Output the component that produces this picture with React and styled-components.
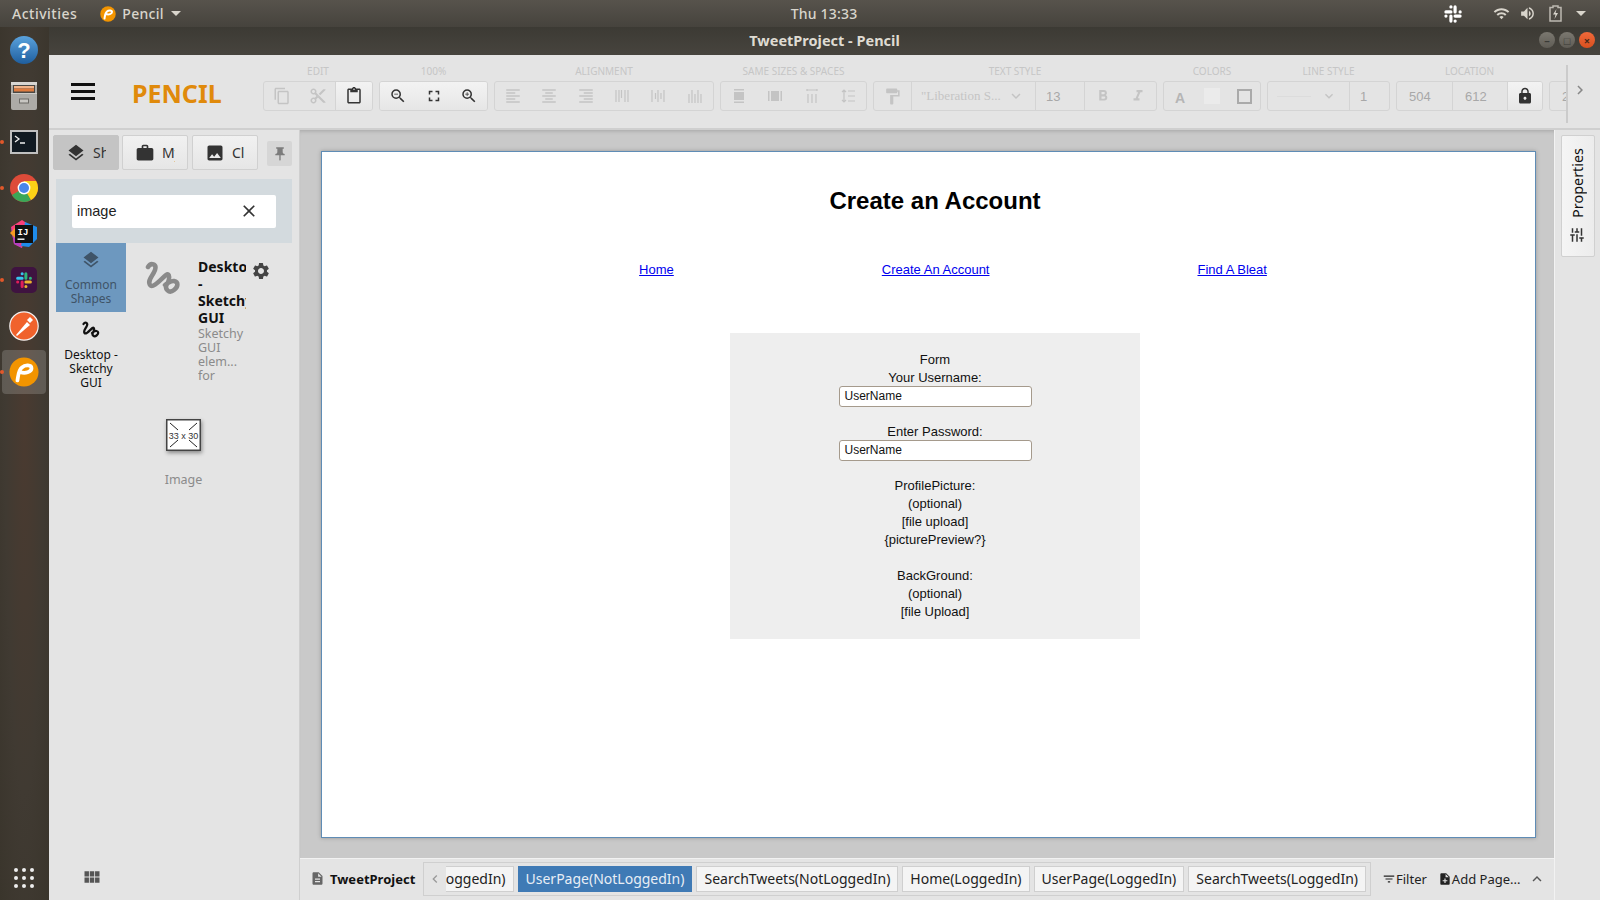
import React from "react";
import styled, { createGlobalStyle } from "styled-components";
import {
  MdLayers, MdWork, MdImage, MdPushPin, MdClose, MdSettings, MdContentCopy, MdContentCut,
  MdContentPaste, MdZoomIn, MdZoomOut, MdFullscreen, MdFormatAlignLeft, MdFormatAlignCenter,
  MdFormatAlignRight, MdFormatPaint, MdExpandMore, MdFormatBold, MdFormatItalic, MdLock,
  MdChevronRight, MdChevronLeft, MdViewModule, MdDescription, MdFilterList, MdNoteAdd,
  MdExpandLess, MdTune, MdWifi, MdVolumeUp,
} from "react-icons/md";

const GlobalStyle = createGlobalStyle`
  html, body { margin: 0; padding: 0; width: 1600px; height: 900px; overflow: hidden; }
  body { font-family: "Noto Sans", sans-serif; }
  * { box-sizing: border-box; }
`;

const Squiggle = ({ size = 36, color = "#8a8a8a", width = 4.5 }) => (
  <svg width={size} height={size} viewBox="0 0 36 36" fill="none" stroke={color} strokeWidth={width} strokeLinecap="round" strokeLinejoin="round">
    <path d="M3 6 C6 1 12 3 10 9 C8 15 2 19 5 24 C8 28 16 18 21 14 C25 11 25 19 22 23 C19 28 24 33 29 29 C33 26 34 21 29 20 C26 19.500 21 23 20 24" />
  </svg>
);

const PencilLogo = ({ size }) => (
  <svg width={size} height={size} viewBox="0 0 32 32">
    <circle cx="16" cy="16" r="15.5" fill="#f29400" />
    <path d="M9 25 C10 19 10 14 14 11 C17 8 24 8 24 12 C24 16 17 18 12 16" fill="none" stroke="#fff" strokeWidth="4" strokeLinecap="round" />
  </svg>
);

const SlackShape = ({ colors, w = 3.6 }) => (
  <g fill="none" strokeLinecap="round" strokeWidth={w}>
    <path d="M3.500 9.500h6M9.500 3.500h0.100" stroke={colors[0]} />
    <path d="M14.500 3.500v6M20.500 9.500h0.100" stroke={colors[1]} />
    <path d="M20.500 14.500h-6M14.500 20.500h0.100" stroke={colors[2]} />
    <path d="M9.500 20.500v-6M3.500 14.500h0.100" stroke={colors[3]} />
  </g>
);

const Bars = ({ d }) => (
  <svg width="16" height="16" viewBox="0 0 16 16" fill="none" stroke="currentColor" strokeWidth="1.2">
    <path d={d} />
  </svg>
);

const Desktop = styled.div`
  width: 1600px;
  height: 900px;
  display: flex;
  flex-direction: column;
  overflow: hidden;
  background: #3f3830;
`;

const TopBar = styled.div`
  height: 27px;
  flex: none;
  display: grid;
  grid-template-columns: 1fr auto 1fr;
  align-items: center;
  padding: 0 14px 0 12px;
  background: linear-gradient(#57534c, #46433d);
  color: #d9d5cc;
  font-size: 14px;
  font-weight: 500;
`;

const TopLeft = styled.div`
  display: flex;
  align-items: center;
  letter-spacing: 0.5px;
`;

const AppMenu = styled.div`
  display: flex;
  align-items: center;
  gap: 6px;
  margin-left: 23px;
  letter-spacing: 0.3px;
`;

const Caret = styled.span`
  width: 0;
  height: 0;
  margin-left: 1px;
  border-left: 5px solid transparent;
  border-right: 5px solid transparent;
  border-top: 5px solid #d9d5cc;
`;

const Clock = styled.div`
  margin-left: 50px;
  letter-spacing: 0.2px;
`;

const TopRight = styled.div`
  display: flex;
  align-items: center;
  justify-content: flex-end;
  color: #d9d5cc;
`;

const Tray = styled.span`
  display: flex;
  align-items: center;
  margin-left: ${(p) => p.$gap || 8}px;
`;

const Body = styled.div`
  flex: 1;
  min-height: 0;
  display: flex;
`;

const Dock = styled.div`
  width: 49px;
  flex: none;
  display: flex;
  flex-direction: column;
  align-items: center;
  padding: 1px 2px 0 0;
  background: radial-gradient(ellipse at 50% 45%, #4a3a30 0%, #403a32 55%, #3a352c 100%);
`;

const DockItem = styled.div`
  position: relative;
  width: 44px;
  height: 44px;
  margin-bottom: ${(p) => p.$mb ?? 2}px;
  border-radius: 4px;
  display: flex;
  align-items: center;
  justify-content: center;
  background: ${(p) => (p.$active ? "rgba(255,255,255,0.17)" : "transparent")};

  ${(p) =>
    p.$running &&
    `&::before {
      content: "";
      position: absolute;
      left: -2px;
      top: 20px;
      width: 4px;
      height: 4px;
      border-radius: 50%;
      background: #e2582a;
    }`}
`;

const DockGrid = styled.div`
  margin-top: auto;
  margin-bottom: 12px;
  display: grid;
  grid-template-columns: repeat(3, 4px);
  gap: 4px;

  span {
    width: 4px;
    height: 4px;
    border-radius: 50%;
    background: #eeeeee;
  }
`;

const Win = styled.div`
  flex: 1;
  min-width: 0;
  display: flex;
  flex-direction: column;
`;

const TitleBar = styled.div`
  position: relative;
  height: 28px;
  flex: none;
  display: flex;
  align-items: center;
  justify-content: center;
  padding-bottom: 2px;
  background: linear-gradient(#3c3a34, #47443e);
  color: #dfdbd2;
  font-size: 14.500px;
  font-weight: 700;
`;

const WinButtons = styled.div`
  position: absolute;
  right: 5px;
  top: 5px;
  display: flex;
  gap: 4px;
`;

const WinButton = styled.span`
  width: 16px;
  height: 16px;
  border-radius: 50%;
  display: flex;
  align-items: center;
  justify-content: center;
  font-size: 11px;
  line-height: 1;
  color: ${(p) => (p.$close ? "#4a2a1a" : "#3a3a36")};
  background: ${(p) => (p.$close ? "linear-gradient(#f0693a, #d9501f)" : "linear-gradient(#7b7870, #5f5c55)")};
`;

const Toolbar = styled.div`
  position: relative;
  height: 75px;
  flex: none;
  display: flex;
  background: #e4e4e4;
  border-bottom: 2px solid #cfcfcf;
  overflow: hidden;
`;

const Brand = styled.div`
  width: 214px;
  flex: none;
  display: flex;
  align-items: center;
  padding: 2px 0 0 22px;
`;

const Hamburger = styled.div`
  width: 24px;
  height: 17px;
  margin: 0 37px 3px 0;
  border-top: 3px solid #111;
  border-bottom: 3px solid #111;
  position: relative;

  &::after {
    content: "";
    position: absolute;
    left: 0;
    right: 0;
    top: 4px;
    height: 3px;
    background: #111;
  }
`;

const Logo = styled.div`
  color: #e08a0b;
  font-size: 25px;
  font-weight: 700;
`;

const ToolGroups = styled.div`
  width: 1304px;
  flex: none;
  display: flex;
  gap: 6px;
  overflow: hidden;
  padding-top: 9px;
`;

const ToolSection = styled.div`
  flex: none;
  width: ${(p) => p.$w}px;
  display: flex;
  flex-direction: column;
  align-items: center;
`;

const ToolLabel = styled.div`
  height: 17px;
  font-size: 10px;
  line-height: 15px;
  color: #c6c6c6;
  text-transform: uppercase;
  white-space: nowrap;
`;

const ToolBox = styled.div`
  width: 100%;
  height: 30px;
  display: flex;
  border: 1px solid #d4d4d4;
  border-radius: 3px;
  overflow: hidden;
`;

const ToolCell = styled.div`
  flex: ${(p) => (p.$w ? `0 0 ${p.$w}px` : "1 1 0")};
  display: flex;
  align-items: center;
  justify-content: ${(p) => p.$justify || "center"};
  padding: ${(p) => p.$pad || 0};
  font-size: 14px;
  color: ${(p) => (p.$on ? "#333" : "#c4c4c4")};
  background: ${(p) => (p.$on ? "linear-gradient(#f3f3f3, #e6e6e6)" : "transparent")};
  border-left: ${(p) => (p.$line ? "1px solid #d4d4d4" : "none")};
  white-space: nowrap;
`;

const FieldCell = styled(ToolCell)`
  justify-content: flex-start;
  padding-left: ${(p) => p.$left ?? 12}px;
  font-family: "Liberation Sans", sans-serif;
  font-size: 13px;
  color: #a8a8a8;
`;

const SerifValue = styled.span`
  flex: 1;
  font-family: "Liberation Serif", serif;
  font-size: 13px;
`;

const TextSwatch = styled.span`
  font-size: 14px;
  font-weight: 700;
  font-family: "Liberation Sans", sans-serif;
  color: #b5b5b5;
  padding-top: 3px;
`;

const FillSwatch = styled.span`
  width: 16px;
  height: 16px;
  background: #ebebeb;
`;

const StrokeSwatch = styled.span`
  width: 15px;
  height: 15px;
  border: 2px solid #aaaaaa;
`;

const LinePreview = styled.span`
  flex: 1;
  height: 1px;
  margin-right: 10px;
  background: #dcdcdc;
`;

const ToolMore = styled.div`
  position: absolute;
  right: 0;
  top: 0;
  bottom: 0;
  width: 34px;
  display: flex;
  align-items: center;
  justify-content: center;
  color: #888;
  background: #e4e4e4;
  padding: 0 6px 3px 0;

  &::before {
    content: "";
    position: absolute;
    left: 0;
    top: 10px;
    height: 58px;
    width: 2px;
    background: #cbcbcb;
  }
`;

const Main = styled.div`
  flex: 1;
  min-height: 0;
  display: flex;
`;

const SidePanel = styled.div`
  width: 251px;
  flex: none;
  display: flex;
  flex-direction: column;
  background: #e4e4e4;
  border-right: 1px solid #cfcfcf;
  padding: 5px 0 0 4px;
`;

const TabRow = styled.div`
  display: flex;
  align-items: center;
  height: 35px;
`;

const SideTab = styled.div`
  width: 66px;
  height: 35px;
  margin-right: ${(p) => p.$mr ?? 3}px;
  display: flex;
  align-items: center;
  gap: 7px;
  padding-left: 12px;
  border-radius: 2px;
  border: 1px solid ${(p) => (p.$active ? "#c4c4c4" : "#d0d0d0")};
  background: ${(p) => (p.$active ? "#c4c4c4" : "linear-gradient(#f1f1f1, #e6e6e6)")};
  color: #333;
  font-size: 14px;
`;

const TabText = styled.span`
  width: 13px;
  overflow: hidden;
  white-space: nowrap;
`;

const PinButton = styled.div`
  width: 25px;
  height: 25px;
  margin: 2px 0 0 9px;
  display: flex;
  align-items: center;
  justify-content: center;
  border-radius: 2px;
  background: #d6d6d6;
  color: #7c7c7c;
`;

const SearchArea = styled.div`
  width: 236px;
  height: 64px;
  margin: 9px 0 0 3px;
  padding: 16px;
  background: #d3dade;
`;

const SearchBox = styled.div`
  height: 33px;
  display: flex;
  align-items: center;
  justify-content: space-between;
  padding: 0 17px 2px 5px;
  border-radius: 2px;
  background: #fff;
  font-family: "Liberation Sans", sans-serif;
  font-size: 14.500px;
  color: #222;
`;

const Library = styled.div`
  flex: 1;
  min-height: 0;
  display: flex;
  margin-left: 3px;
`;

const CollectionList = styled.div`
  width: 70px;
  flex: none;
`;

const Collection = styled.div`
  height: ${(p) => (p.$active ? 69 : 90)}px;
  padding: ${(p) => (p.$active ? "7px 0 0" : "9px 7px 0")};
  display: flex;
  flex-direction: column;
  align-items: center;
  text-align: center;
  font-size: 12px;
  line-height: 14px;
  color: ${(p) => (p.$active ? "#3f5468" : "#111")};
  background: ${(p) => (p.$active ? "#6d98bf" : "transparent")};
`;

const CollectionIcon = styled.div`
  height: ${(p) => (p.$active ? 28 : 27)}px;
  color: #3f5468;
`;

const ShapePane = styled.div`
  flex: 1;
  min-width: 0;
  display: flex;
  flex-direction: column;
`;

const PaneHeader = styled.div`
  display: flex;
  padding: 18px 0 0 19px;
  height: 157px;
`;

const PaneIcon = styled.div`
  width: 53px;
  flex: none;
`;

const PaneText = styled.div`
  width: 48px;
  flex: none;
  margin-top: -3px;
  overflow: hidden;
  font-size: 14px;
  line-height: 17px;
`;

const PaneTitle = styled.div`
  font-weight: 700;
  color: #111;
`;

const PaneDesc = styled.div`
  margin-top: 1px;
  font-size: 12.500px;
  line-height: 14px;
  color: #8b8b8b;
`;

const GearIcon = styled.div`
  margin-left: 5px;
  color: #444;
`;

const ShapeCard = styled.div`
  width: 114px;
  padding-left: 1px;
  display: flex;
  flex-direction: column;
  align-items: center;
  color: #8b8b8b;
  font-size: 12.500px;
  margin-top: 19px;
`;

const ShapeThumb = styled.div`
  width: 35px;
  height: 32px;
  margin-bottom: 20px;
  box-shadow: 1px 2px 4px rgba(0, 0, 0, 0.4);
`;

const SideFooter = styled.div`
  height: 33px;
  flex: none;
  padding-left: 29px;
  color: #555;
`;

const Center = styled.div`
  flex: 1;
  min-width: 0;
  display: flex;
  flex-direction: column;
`;

const CanvasArea = styled.div`
  flex: 1;
  min-height: 0;
  padding: 21px 18px 20px 21px;
  background: #c9c9c9;
  box-shadow: inset 0 4px 4px -3px rgba(0, 0, 0, 0.18);
`;

const Page = styled.div`
  height: 100%;
  padding: 35px 0 0 13px;
  background: #fff;
  border: 1px solid #5f8cb5;
  box-shadow: 0 0 4px rgba(0, 0, 0, 0.25);
  display: flex;
  flex-direction: column;
  align-items: center;
  font-family: "Liberation Sans", sans-serif;
  font-size: 13px;
  color: #111;
`;

const Heading = styled.h1`
  margin: 0;
  font-size: 24px;
  line-height: 28px;
  font-weight: 700;
  color: #000;
`;

const NavLinks = styled.nav`
  display: flex;
  gap: 208px;
  margin: 46px 0 0 36px;
  line-height: 18px;
`;

const NavLink = styled.a`
  color: #0000ee;
  text-decoration: underline;
`;

const FormBox = styled.div`
  width: 410px;
  height: 306px;
  margin-top: 54px;
  padding-top: 18px;
  background: #eeeeee;
  text-align: center;
  line-height: 18px;
`;

const FormBlock = styled.div`
  margin-bottom: 18px;
`;

const FakeInput = styled.div`
  width: 193px;
  height: 21px;
  margin: -1px auto -2px;
  padding-left: 5px;
  background: #fff;
  border: 1px solid #a59a8c;
  border-radius: 3px;
  text-align: left;
  font-size: 12px;
  line-height: 19px;
  color: #111;
`;

const BottomBar = styled.div`
  height: 42px;
  flex: none;
  display: flex;
  align-items: center;
  padding-bottom: 2px;
  background: #e4e4e4;
  border-top: 1px solid #f2f2f2;
  font-size: 14px;
  color: #222;
`;

const ProjectName = styled.div`
  width: 123px;
  flex: none;
  display: flex;
  align-items: center;
  gap: 5px;
  padding-left: 10px;
  font-size: 13px;
  font-weight: 700;
  color: #111;
`;

const PageTabs = styled.div`
  position: relative;
  width: 948px;
  height: 34px;
  flex: none;
  display: flex;
  justify-content: flex-end;
  align-items: center;
  gap: 4px;
  padding-right: 4px;
  border: 1px solid #cfcfcf;
  overflow: hidden;
`;

const PageTab = styled.div`
  flex: none;
  height: 26px;
  display: flex;
  align-items: center;
  padding: 0 7px;
  white-space: nowrap;
  background: ${(p) => (p.$active ? "#3f7ab5" : "#f4f4f4")};
  border: 1px solid ${(p) => (p.$active ? "#3f7ab5" : "#cfcfcf")};
  color: ${(p) => (p.$active ? "#e8eef5" : "#222")};
`;

const ScrollLeft = styled.div`
  position: absolute;
  left: 0;
  top: 0;
  bottom: 0;
  width: 22px;
  display: flex;
  align-items: center;
  justify-content: center;
  background: #e4e4e4;
  color: #999;
`;

const BarAction = styled.div`
  display: flex;
  align-items: center;
  margin-left: ${(p) => p.$ml}px;
  font-size: 13px;
  color: #222;
  white-space: nowrap;
`;

const Properties = styled.div`
  width: 46px;
  flex: none;
  padding: 5px 5px 0 6px;
  background: #e4e4e4;
  border-left: 1px solid #f2f2f2;
`;

const PropertiesTab = styled.div`
  height: 122px;
  display: flex;
  flex-direction: column;
  align-items: center;
  justify-content: flex-end;
  gap: 8px;
  padding: 0 2px 12px 0;
  background: linear-gradient(90deg, #f5f5f5, #ececec);
  border: 1px solid #d0d0d0;
  border-radius: 2px;
  color: #333;
`;

const PropertiesLabel = styled.div`
  writing-mode: vertical-rl;
  transform: rotate(180deg);
  font-size: 14.400px;
  color: #111;
`;

const TuneIcon = styled(MdTune)`
  transform: rotate(90deg);
`;

const Row = ({ label, cells, w }) => (
  <ToolSection $w={w}>
    <ToolLabel>{label}</ToolLabel>
    <ToolBox>{cells}</ToolBox>
  </ToolSection>
);

const lines = {
  distLeft: "M2 2v12M5 2v12M7.500 2v8M11 2v12M14 2v12",
  distCenter: "M2 2v12M5.500 5v6M8 2v12M11 5v6M14 2v12",
  distRight: "M2 6v9M5 2v13M8 6v9M11 2v13M14 6v9",
  sameTop: "M3 2h10M3 1v2M13 1v2M4 6v9M8 6v9M12 6v9",
  sameSpace: "M4 2v12M2 4l2-2 2 2M2 12l2 2 2-2M8 3h7M8 8h7M8 13h7",
};

export default function App() {
  const white = ["#fff", "#fff", "#fff", "#fff"];
  return (
    <Desktop>
      <GlobalStyle />
      <TopBar>
        <TopLeft>
          Activities
          <AppMenu>
            <PencilLogo size={16} />
            Pencil
            <Caret />
          </AppMenu>
        </TopLeft>
        <Clock>Thu 13:33</Clock>
        <TopRight>
          <svg width="20" height="20" viewBox="0 0 24 24"><SlackShape colors={white} w={3.8} /></svg>
          <Tray $gap={30}><MdWifi size={17} /></Tray>
          <Tray $gap={9}><MdVolumeUp size={17} /></Tray>
          <Tray $gap={13}>
            <svg width="13" height="17" viewBox="0 0 13 17">
              <path d="M4 1h5v1.500h3V16H1V2.500h3z" fill="none" stroke="#bdb9b1" strokeWidth="1.500" />
              <path d="M7.500 4L4 9.500h2.500L5.500 14 9 8H6.500z" fill="#d9d5cc" />
            </svg>
          </Tray>
          <Tray $gap={13}><Caret /></Tray>
        </TopRight>
      </TopBar>
      <Body>
        <Dock>
          <DockItem>
            <svg width="30" height="30" viewBox="0 0 30 30">
              <defs>
                <linearGradient id="help" x1="0" y1="0" x2="0" y2="1">
                  <stop offset="0" stopColor="#5aa2dd" />
                  <stop offset="1" stopColor="#1f5e9e" />
                </linearGradient>
              </defs>
              <circle cx="15" cy="15" r="14" fill="url(#help)" />
              <text x="15" y="23" textAnchor="middle" fontFamily="Liberation Sans" fontWeight="700" fontSize="22" fill="#fff">?</text>
            </svg>
          </DockItem>
          <DockItem>
            <svg width="28" height="30" viewBox="0 0 28 30">
              <rect x="1" y="1" width="26" height="28" rx="2" fill="#adaba7" />
              <rect x="1" y="1" width="26" height="3" fill="#d8d6d2" />
              <rect x="3" y="4" width="22" height="8" fill="#4a4844" />
              <rect x="4" y="5" width="20" height="2.500" fill="#f1b48a" />
              <rect x="4" y="7.500" width="20" height="3" fill="#df7b3e" />
              <rect x="1" y="12" width="26" height="1" fill="#cfcdc9" />
              <rect x="9.500" y="18" width="9" height="4" fill="#c8c6c2" stroke="#6d6b67" />
            </svg>
          </DockItem>
          <DockItem $running>
            <svg width="28" height="24" viewBox="0 0 28 24">
              <rect x="1" y="1" width="26" height="22" fill="#111a22" stroke="#c0c0c0" strokeWidth="2" />
              <path d="M5 6l4 3-4 3M10 13h5" fill="none" stroke="#eee" strokeWidth="1.300" />
            </svg>
          </DockItem>
          <DockItem $running>
            <svg width="28" height="28" viewBox="0 0 28 28">
              <circle cx="14" cy="14" r="14" fill="#dd4b39" />
              <path d="M14 14 L1.900 21 A14 14 0 0 0 21 26.100Z" fill="#3aa757" />
              <path d="M14 14 L21 26.100 A14 14 0 0 0 26.100 7 L14 7Z" fill="#fcd116" />
              <circle cx="14" cy="14" r="6.400" fill="#fff" />
              <circle cx="14" cy="14" r="5" fill="#4a86e8" />
            </svg>
          </DockItem>
          <DockItem>
            <svg width="30" height="30" viewBox="0 0 30 30">
              <path d="M2 8l11-7 6 4-6 24-8-4z" fill="#fc3f7a" />
              <path d="M16 3l12 5v12l-8 8-8-1z" fill="#1f8ceb" />
              <path d="M2 8l3 17 8 4z" fill="#b13fc0" />
              <path d="M1 14l5-5v10z" fill="#f59a23" />
              <rect x="6" y="6" width="18" height="18" fill="#111" />
              <text x="8.500" y="15.500" fontFamily="Liberation Mono" fontWeight="700" fontSize="9" fill="#fff">IJ</text>
              <rect x="8.500" y="19.500" width="7" height="1.400" fill="#fff" />
            </svg>
          </DockItem>
          <DockItem $running>
            <svg width="26" height="26" viewBox="0 0 26 26">
              <rect width="26" height="26" rx="5" fill="#3f1340" />
              <g transform="translate(4 4) scale(0.75)">
                <SlackShape colors={["#36c5f0", "#2eb67d", "#ecb22e", "#e01e5a"]} w={4} />
              </g>
            </svg>
          </DockItem>
          <DockItem>
            <svg width="30" height="30" viewBox="0 0 30 30">
              <circle cx="15" cy="15" r="14.200" fill="#f0622c" stroke="#f3f3f3" strokeWidth="1.200" />
              <path d="M7 24l11-13 3 3-13 11z" fill="#fff" />
              <path d="M18 9l3-3 3 3-3 3z" fill="#fff" />
            </svg>
          </DockItem>
          <DockItem $active $running $mb={0}>
            <PencilLogo size={30} />
          </DockItem>
          <DockGrid>
            {Array.from({ length: 9 }).map((_, i) => <span key={i} />)}
          </DockGrid>
        </Dock>
        <Win>
          <TitleBar>
            TweetProject - Pencil
            <WinButtons>
              <WinButton>–</WinButton>
              <WinButton>□</WinButton>
              <WinButton $close>×</WinButton>
            </WinButtons>
          </TitleBar>
          <Toolbar>
            <Brand>
              <Hamburger />
              <Logo>PENCIL</Logo>
            </Brand>
            <ToolGroups>
              <Row label="Edit" w={110} cells={<>
                <ToolCell><MdContentCopy size={18} /></ToolCell>
                <ToolCell><MdContentCut size={18} /></ToolCell>
                <ToolCell $on $line><MdContentPaste size={18} /></ToolCell>
              </>} />
              <Row label="100%" w={109} cells={<>
                <ToolCell $on><MdZoomOut size={18} /></ToolCell>
                <ToolCell $on><MdFullscreen size={18} /></ToolCell>
                <ToolCell $on><MdZoomIn size={18} /></ToolCell>
              </>} />
              <Row label="Alignment" w={220} cells={<>
                <ToolCell><MdFormatAlignLeft size={18} /></ToolCell>
                <ToolCell><MdFormatAlignCenter size={18} /></ToolCell>
                <ToolCell><MdFormatAlignRight size={18} /></ToolCell>
                <ToolCell><Bars d={lines.distLeft} /></ToolCell>
                <ToolCell><Bars d={lines.distCenter} /></ToolCell>
                <ToolCell><Bars d={lines.distRight} /></ToolCell>
              </>} />
              <Row label="Same sizes & spaces" w={147} cells={<>
                <ToolCell>
                  <svg width="16" height="16" viewBox="0 0 16 16" fill="currentColor"><path d="M3 1h10v1.500H3zM3 13.500h10V15H3zM3 4h10v8H3z" /></svg>
                </ToolCell>
                <ToolCell>
                  <svg width="16" height="16" viewBox="0 0 16 16" fill="currentColor"><path d="M1 3h1.500v10H1zM13.500 3H15v10h-1.500zM4 3h8v10H4z" /></svg>
                </ToolCell>
                <ToolCell><Bars d={lines.sameTop} /></ToolCell>
                <ToolCell><Bars d={lines.sameSpace} /></ToolCell>
              </>} />
              <Row label="Text style" w={284} cells={<>
                <ToolCell $w={37}><MdFormatPaint size={19} /></ToolCell>
                <ToolCell $w={124} $line $justify="flex-start" $pad="0 10px 0 9px">
                  <SerifValue>"Liberation S...</SerifValue>
                  <MdExpandMore size={18} />
                </ToolCell>
                <FieldCell $w={49} $line $left={10}>13</FieldCell>
                <ToolCell $line><MdFormatBold size={18} /></ToolCell>
                <ToolCell><MdFormatItalic size={18} /></ToolCell>
              </>} />
              <Row label="Colors" w={98} cells={<>
                <ToolCell><TextSwatch>A</TextSwatch></ToolCell>
                <ToolCell><FillSwatch /></ToolCell>
                <ToolCell><StrokeSwatch /></ToolCell>
              </>} />
              <Row label="Line style" w={123} cells={<>
                <ToolCell $w={81} $pad="0 12px 0 9px">
                  <LinePreview />
                  <MdExpandMore size={16} />
                </ToolCell>
                <FieldCell $line $left={10}>1</FieldCell>
              </>} />
              <Row label="Location" w={147} cells={<>
                <FieldCell $w={55}>504</FieldCell>
                <FieldCell $w={55} $line>612</FieldCell>
                <ToolCell $on $line><MdLock size={18} /></ToolCell>
              </>} />
              <Row label="" w={147} cells={<>
                <FieldCell $w={55}>2</FieldCell>
              </>} />
            </ToolGroups>
            <ToolMore><MdChevronRight size={18} /></ToolMore>
          </Toolbar>
          <Main>
            <SidePanel>
              <TabRow>
                <SideTab $active>
                  <MdLayers size={20} />
                  <TabText>Shapes</TabText>
                </SideTab>
                <SideTab $mr={4}>
                  <MdWork size={20} />
                  <TabText>My Stuff</TabText>
                </SideTab>
                <SideTab $mr={0}>
                  <MdImage size={20} />
                  <TabText>Clipart</TabText>
                </SideTab>
                <PinButton><MdPushPin size={16} /></PinButton>
              </TabRow>
              <SearchArea>
                <SearchBox>
                  image
                  <MdClose size={20} color="#333" />
                </SearchBox>
              </SearchArea>
              <Library>
                <CollectionList>
                  <Collection $active>
                    <CollectionIcon $active><MdLayers size={20} /></CollectionIcon>
                    Common Shapes
                  </Collection>
                  <Collection>
                    <CollectionIcon><Squiggle size={18} color="#111" width={4.5} /></CollectionIcon>
                    Desktop - Sketchy GUI
                  </Collection>
                </CollectionList>
                <ShapePane>
                  <PaneHeader>
                    <PaneIcon><Squiggle size={36} /></PaneIcon>
                    <PaneText>
                      <PaneTitle>Desktop - Sketchy GUI</PaneTitle>
                      <PaneDesc>Sketchy GUI elem... for</PaneDesc>
                    </PaneText>
                    <GearIcon><MdSettings size={20} /></GearIcon>
                  </PaneHeader>
                  <ShapeCard>
                    <ShapeThumb>
                      <svg width="35" height="32" viewBox="0 0 35 32">
                        <rect x="0.750" y="0.750" width="33.500" height="30.500" fill="#fff" stroke="#444" strokeWidth="1.500" />
                        <path d="M4 4l8 7M31 4l-8 7M4 28l8-7M31 28l-8-7" stroke="#222" />
                        <text x="17.500" y="19.500" textAnchor="middle" fontSize="9" fontFamily="Liberation Sans" fill="#333">33 x 30</text>
                      </svg>
                    </ShapeThumb>
                    Image
                  </ShapeCard>
                </ShapePane>
              </Library>
              <SideFooter><MdViewModule size={20} /></SideFooter>
            </SidePanel>
            <Center>
              <CanvasArea>
                <Page>
                  <Heading>Create an Account</Heading>
                  <NavLinks>
                    <NavLink href="#">Home</NavLink>
                    <NavLink href="#">Create An Account</NavLink>
                    <NavLink href="#">Find A Bleat</NavLink>
                  </NavLinks>
                  <FormBox>
                    <div>Form</div>
                    <FormBlock>
                      <div>Your Username:</div>
                      <FakeInput>UserName</FakeInput>
                    </FormBlock>
                    <FormBlock>
                      <div>Enter Password:</div>
                      <FakeInput>UserName</FakeInput>
                    </FormBlock>
                    <FormBlock>
                      <div>ProfilePicture:</div>
                      <div>(optional)</div>
                      <div>[file upload]</div>
                      <div>{"{picturePreview?}"}</div>
                    </FormBlock>
                    <div>BackGround:</div>
                    <div>(optional)</div>
                    <div>[file Upload]</div>
                  </FormBox>
                </Page>
              </CanvasArea>
              <BottomBar>
                <ProjectName>
                  <MdDescription size={15} color="#666" />
                  TweetProject
                </ProjectName>
                <PageTabs>
                  <ScrollLeft><MdChevronLeft size={16} /></ScrollLeft>
                  <PageTab>Home(NotLoggedIn)</PageTab>
                  <PageTab $active>UserPage(NotLoggedIn)</PageTab>
                  <PageTab>SearchTweets(NotLoggedIn)</PageTab>
                  <PageTab>Home(LoggedIn)</PageTab>
                  <PageTab>UserPage(LoggedIn)</PageTab>
                  <PageTab>SearchTweets(LoggedIn)</PageTab>
                </PageTabs>
                <BarAction $ml={11}><MdFilterList size={14} />Filter</BarAction>
                <BarAction $ml={11}><MdNoteAdd size={14} />Add Page...</BarAction>
                <BarAction $ml={8}><MdExpandLess size={18} color="#555" /></BarAction>
              </BottomBar>
            </Center>
            <Properties>
              <PropertiesTab>
                <PropertiesLabel>Properties</PropertiesLabel>
                <TuneIcon size={18} />
              </PropertiesTab>
            </Properties>
          </Main>
        </Win>
      </Body>
    </Desktop>
  );
}
